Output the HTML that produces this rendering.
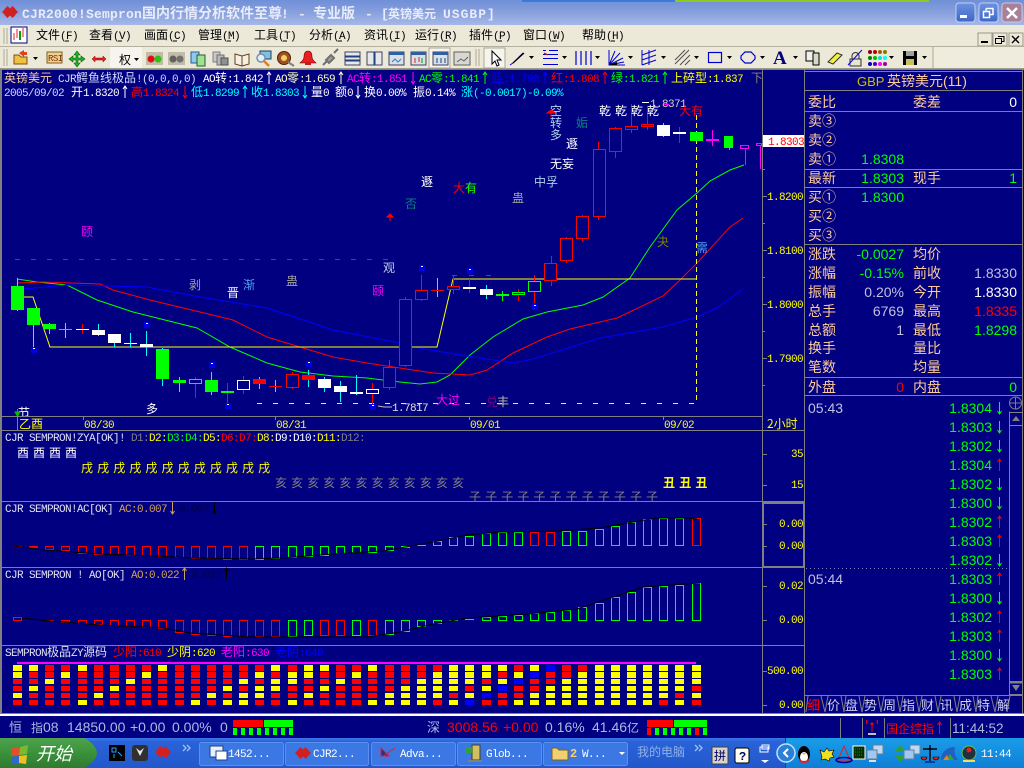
<!DOCTYPE html>
<html><head><meta charset="utf-8"><title>CJR2000</title>
<style>
html,body{margin:0;padding:0;background:#000080;overflow:hidden}
svg{display:block}
text{font-family:"Liberation Mono","WenQuanYi Zen Hei","Noto Sans CJK SC",monospace;font-size:11px;letter-spacing:-.6px;white-space:pre}
.c,tspan.c{font-family:"WenQuanYi Zen Hei","Noto Sans CJK SC",sans-serif;font-size:12px;letter-spacing:0}
.c.o{font-size:14px}
.n{font-family:"Liberation Sans","WenQuanYi Zen Hei",sans-serif;font-size:14px;letter-spacing:0}
.e{text-anchor:end}
.o{fill:#FFCC99}
.y{fill:#FFFF00}
.g{fill:#00FF00}
.l{fill:#C0C0E0}
.w{fill:#fff}
.r{fill:#FF0000}
.k{fill:#000}
.a{fill:none;stroke-width:1}
.t{font-size:13px}
</style></head><body>
<svg xmlns="http://www.w3.org/2000/svg" width="1024" height="768" viewBox="0 0 1024 768">
<defs>
<linearGradient id="tb" x1="0" y1="0" x2="0" y2="1"><stop offset="0" stop-color="#6f8fd8"/><stop offset=".5" stop-color="#88a0dc"/><stop offset="1" stop-color="#a6b8e8"/></linearGradient>
<linearGradient id="tk" x1="0" y1="0" x2="0" y2="1"><stop offset="0" stop-color="#3a78e8"/><stop offset=".12" stop-color="#2a62d8"/><stop offset="1" stop-color="#2258cc"/></linearGradient>
<linearGradient id="st" x1="0" y1="0" x2="0" y2="1"><stop offset="0" stop-color="#4fa24f"/><stop offset=".4" stop-color="#3d963d"/><stop offset="1" stop-color="#2f7a2f"/></linearGradient>
<linearGradient id="tr" x1="0" y1="0" x2="0" y2="1"><stop offset="0" stop-color="#1a9ce8"/><stop offset="1" stop-color="#0f7fd6"/></linearGradient>
<linearGradient id="bb" x1="0" y1="0" x2="0" y2="1"><stop offset="0" stop-color="#6c92e0"/><stop offset="1" stop-color="#3f66c6"/></linearGradient>
<path id="u" d="M0 -6V6M-2 -3L0 -6L2 -3" fill="none"/>
<path id="d" d="M0 -6V6M-2 3L0 6L2 3" fill="none"/>
<path id="row" fill="none" d="M13 0h9M29 0h9M45 0h9M61 0h9M78 0h9M94 0h9M110 0h9M126 0h9M142 0h9M158 0h9M175 0h9M191 0h9M207 0h9M223 0h9M239 0h9M255 0h9M271 0h9M288 0h9M304 0h9M320 0h9M336 0h9M352 0h9M368 0h9M385 0h9M401 0h9M417 0h9M433 0h9M449 0h9M465 0h9M482 0h9M498 0h9M514 0h9M530 0h9M546 0h9M562 0h9M578 0h9M595 0h9M611 0h9M627 0h9M643 0h9M659 0h9M675 0h9M692 0h9"/>
<path id="dd" d="M0 0h5l-2.5 3z" fill="#000"/>
<path id="dm" d="M0 0l3 -3l3 3l-3 3z" fill="#d02020"/>
<clipPath id="cm"><rect x="2" y="70" width="760" height="346"/></clipPath>
<clipPath id="c1"><rect x="2" y="431" width="760" height="70"/></clipPath>
</defs>

<rect width="1024" height="768" fill="#000080"/>
<!-- title -->
<rect width="1024" height="25" fill="url(#tb)"/>
<rect x="522" y="0" width="153" height="2" fill="#3a7ad8"/><rect x="675" y="0" width="254" height="2" fill="#90c820"/>
<g><use href="#dm" x="2" y="12"/><use href="#dm" x="7" y="12"/><use href="#dm" x="12" y="12"/><use href="#dm" x="4.5" y="9"/><use href="#dm" x="9.5" y="9"/><use href="#dm" x="4.5" y="15"/><use href="#dm" x="9.5" y="15"/></g>
<text x="22" y="18" fill="#e8ecfa" style="font-size:13px;letter-spacing:.2px;font-weight:bold">CJR2000!Sempron</text>
<text x="142" y="18" class="c" fill="#e8ecfa" style="font-size:14px;font-weight:bold">国内行情分析软件至尊</text>
<text x="281" y="18" fill="#e8ecfa" style="font-size:13px;letter-spacing:0;font-weight:bold">!</text>
<text x="298" y="18" fill="#e8ecfa" style="font-size:13px;letter-spacing:0;font-weight:bold">-</text>
<text x="313" y="18" class="c" fill="#e8ecfa" style="font-size:14px;font-weight:bold">专业版</text>
<text x="365" y="18" fill="#e8ecfa" style="font-size:13px;letter-spacing:0;font-weight:bold">-</text>
<text x="381" y="18" fill="#e8ecfa" style="font-size:13px;letter-spacing:0;font-weight:bold">[</text>
<text x="388" y="18" class="c" fill="#e8ecfa" style="font-size:12px;font-weight:bold;letter-spacing:0">英镑美元</text>
<text x="443" y="18" fill="#e8ecfa" style="font-size:13px;letter-spacing:1px;font-weight:bold">USGBP]</text>
<rect x="956" y="3" width="19" height="19" rx="3" fill="url(#bb)" stroke="#c0d0f0"/><rect x="960" y="15" width="7" height="3" fill="#fff"/>
<rect x="979" y="3" width="19" height="19" rx="3" fill="url(#bb)" stroke="#c0d0f0"/><path d="M986 8.500h7v6h-3M986 8.500v2M983.500 11.500h6v6h-6z" fill="none" stroke="#fff" stroke-width="1.500"/>
<rect x="1002" y="3" width="20" height="19" rx="3" fill="#a88098" stroke="#d0c8d8"/><path d="M1007 8l10 10M1017 8l-10 10" stroke="#fff" stroke-width="2.500"/>

<!-- menu -->
<rect y="25" width="1024" height="22" fill="#ECE9D8"/>
<rect y="47" width="1024" height="22" fill="#ECE9D8"/>
<path d="M4 28v16M7 28v16" stroke="#c4c0b0" stroke-width="1.500"/>
<rect x="11" y="27" width="16" height="16" fill="#fff" stroke="#000080"/><path d="M14 33v7M17 29v9M20 31v9M23 28v9" stroke="#e02020"/><path d="M20 31v9" stroke="#00a000" stroke-width="2"/>
<g fill="#000">
<text class="c" x="36" y="39">文件</text><text x="60" y="39">(F)</text>
<text class="c" x="89" y="39">查看</text><text x="113" y="39">(V)</text>
<text class="c" x="144" y="39">画面</text><text x="168" y="39">(C)</text>
<text class="c" x="198" y="39">管理</text><text x="222" y="39">(M)</text>
<text class="c" x="254" y="39">工具</text><text x="278" y="39">(T)</text>
<text class="c" x="309" y="39">分析</text><text x="333" y="39">(A)</text>
<text class="c" x="364" y="39">资讯</text><text x="388" y="39">(I)</text>
<text class="c" x="415" y="39">运行</text><text x="439" y="39">(R)</text>
<text class="c" x="469" y="39">插件</text><text x="493" y="39">(P)</text>
<text class="c" x="523" y="39">窗口</text><text x="547" y="39">(W)</text>
<text class="c" x="582" y="39">帮助</text><text x="606" y="39">(H)</text>
</g>
<path d="M65 41h4M118 41h4M173 41h4M227 41h4M283 41h4M338 41h4M393 41h3M444 41h4M498 41h4M552 41h5M611 41h4" stroke="#000"/>
<rect x="978" y="33" width="14" height="13" fill="#ECE9D8" stroke="#9a9888"/><rect x="981" y="41" width="7" height="2" fill="#000"/>
<rect x="993" y="33" width="14" height="13" fill="#ECE9D8" stroke="#9a9888"/><path d="M998 36.500h6v5h-2M995.500 38.500h6v5h-6z" fill="none" stroke="#000"/>
<rect x="1009" y="33" width="14" height="13" fill="#ECE9D8" stroke="#9a9888"/><path d="M1012 36l7 7M1019 36l-7 7" stroke="#000" stroke-width="1.400"/>

<!-- toolbar -->
<path d="M0 46.500h1024" stroke="#b4b0a0"/>
<path d="M4 49v17M7 49v17" stroke="#c4c0b0" stroke-width="1.500"/>
<rect x="933" y="47" width="91" height="21" fill="#EFEBDD"/><path d="M933 47v22" stroke="#aca899"/>
<path d="M14 64V55h5l2 2h6v7z" fill="#f0c040" stroke="#805010"/><path d="M19 53l5-3v2h3v3h-3v2z" fill="#e04020"/>
<use href="#dd" x="33" y="57"/>
<rect x="47" y="52" width="15" height="11" fill="#f0d090" stroke="#806020"/><text x="48" y="61" fill="#803000" style="font-size:9px;letter-spacing:-.5px">RSI</text>
<path d="M77 51l3 4h-2v3h3v-2l4 3-4 3v-2h-3v3h2l-3 4-3-4h2v-3h-3v2l-4-3 4-3v2h3v-3h-2z" fill="#20b020" stroke="#106010" stroke-width=".6"/>
<path d="M92 59l3-3v2h8v-2l3 3-3 3v-2h-8v2z" fill="#f02020" stroke="#800000" stroke-width=".5"/>
<rect x="110" y="47" width="32" height="21" fill="#F6F4EC"/>
<text class="c" x="119" y="64" fill="#000">权</text><use href="#dd" x="134" y="58"/>
<rect x="146" y="52" width="17" height="13" fill="#c0bca8"/><circle cx="151" cy="59" r="3.500" fill="#e01010"/><circle cx="158" cy="59" r="3.500" fill="#30c010"/>
<rect x="168" y="52" width="17" height="13" fill="#c0bca8"/><circle cx="173" cy="59" r="3.500" fill="#606060"/><circle cx="180" cy="59" r="3.500" fill="#707070"/>
<rect x="191" y="52" width="8" height="11" fill="#90c8f0" stroke="#206090"/><rect x="197" y="55" width="8" height="11" fill="#a0e090" stroke="#206030"/>
<rect x="213" y="52" width="7" height="10" fill="#c8c8c8" stroke="#808080"/><rect x="217" y="55" width="7" height="10" fill="#b8b8b8" stroke="#707070"/><rect x="221" y="58" width="7" height="7" fill="#909090" stroke="#505050"/>
<path d="M235 54l7 2 7-2v10l-7 2-7-2zM242 56v10" fill="#f6f0e0" stroke="#604020"/>
<rect x="260" y="51" width="11" height="8" fill="#80c0e0" stroke="#204060"/><circle cx="261" cy="58" r="4" fill="#e0f0ff" stroke="#8090a0" stroke-width="1.500"/><path d="M264 61l5 5" stroke="#e08020" stroke-width="2.500"/>
<circle cx="284" cy="58" r="6.500" fill="#a05020" stroke="#502010"/><circle cx="284" cy="58" r="3" fill="#f0d060"/><path d="M288 62l6 4" stroke="#808080" stroke-width="2"/>
<path d="M308 51c-3 0-4 3-4 6 0 3-3 5-4 6h16c-1-1-4-3-4-6 0-3-1-6-4-6z" fill="#e82020" stroke="#700000" stroke-width=".6"/><rect x="305" y="63" width="6" height="2" fill="#c02020"/>
<path d="M323 65l4-4M334 53l4-4M326 60l5-5 3 3-5 5z" stroke="#707070" stroke-width="2" fill="#a0a0a0"/>
<rect x="345" y="52" width="15" height="13" fill="#e8e8e8" stroke="#404060"/><path d="M345 56.500h15M345 60.500h15" stroke="#204080" stroke-width="2"/>
<rect x="367" y="52" width="15" height="13" fill="#e8e8e8" stroke="#404060"/><path d="M374.500 52v13" stroke="#204080" stroke-width="2"/>
<rect x="389" y="52" width="15" height="13" fill="#d8e0e8" stroke="#404060"/><rect x="389" y="52" width="15" height="3" fill="#3060a0"/><path d="M392 62l3-3 3 3 3-3" stroke="#3080c0" fill="none"/>
<rect x="411" y="52" width="15" height="13" fill="#d8e0e8" stroke="#404060"/><rect x="411" y="52" width="15" height="3" fill="#3060a0"/><path d="M415 58v5M419 57v5" stroke="#e02020"/><path d="M422 58v5" stroke="#00a000"/>
<rect x="429" y="48" width="21" height="20" fill="#F6F4EC" stroke="#aca899"/><rect x="433" y="52" width="15" height="13" fill="#d8e0e8" stroke="#404060"/><rect x="433" y="52" width="15" height="3" fill="#3060a0"/><path d="M437 58v5M441 58v5M445 58v5" stroke="#204080"/>
<rect x="454" y="52" width="16" height="13" fill="#d8d8d0" stroke="#606060"/><path d="M457 62l4-3 3 2 4-4" stroke="#606060" fill="none"/>
<path d="M476 49v17M479 49v17" stroke="#c4c0b0" stroke-width="1.500"/>
<rect x="484" y="48" width="21" height="20" fill="#F6F4EC" stroke="#aca899"/><path d="M492 51v13l3-3 2 5 2-1-2-5h4z" fill="#fff" stroke="#000"/>
<path d="M510 65l3-2M513 63l10-10" stroke="#0000e0"/><path d="M513 63l11-10" stroke="#000" stroke-width="1.200"/><use href="#dd" x="529" y="56"/>
<path d="M543 50.500h3M549 50.500h9M543 54.500h15M543 58.500h15M543 64.500h15" stroke="#0000d0"/><path d="M544 53l4 2" stroke="#d00000"/><use href="#dd" x="562" y="56"/>
<path d="M576 51v14M581 51v14M586 51v14M591 51v14" stroke="#0000d0" stroke-width="1.200"/><use href="#dd" x="595" y="56"/>
<path d="M609 50v15h16M609 65l6-14M609 65l11-12M609 65l14-7M609 65l15-3" stroke="#0000d0" fill="none"/><path d="M609 65l8-3v3z" fill="#000"/><use href="#dd" x="628" y="56"/>
<path d="M642 50v15M642 55l14-5M642 60l14-5M642 65l14-5M649 50v15" stroke="#0000d0" fill="none"/><use href="#dd" x="661" y="56"/>
<path d="M675 60l10-10M675 64l14-14M680 65l10-10M685 65l5-5" stroke="#505050" fill="none"/><use href="#dd" x="694" y="56"/>
<rect x="708.500" y="52.500" width="13" height="10" fill="none" stroke="#0000d0" stroke-width="1.200"/><use href="#dd" x="727" y="56"/>
<path d="M745 52h6l4 4v3l-4 4h-6l-4-4v-3z" fill="none" stroke="#0000d0" stroke-width="1.200"/><use href="#dd" x="760" y="56"/>
<text x="773" y="64" fill="#000080" style="font-family:'Liberation Serif',serif;font-size:19px;font-weight:bold;letter-spacing:0">A</text><use href="#dd" x="793" y="56"/>
<rect x="806" y="51" width="8" height="10" fill="#f0f0e8" stroke="#000"/><path d="M813 53h6v12h-6z" fill="#d8d8c8" stroke="#000"/>
<path d="M828 62l9-9 5 2-9 9z" fill="#f0f040" stroke="#303030"/>
<path d="M850 59h11v7h-11zM852 59v-3a3.500 3.500 0 0 1 7 0v3" fill="#e8e4d0" stroke="#303030"/><path d="M848 65l14-15" stroke="#0000e0"/>
<g><circle cx="870" cy="52" r="2" fill="#900010"/><circle cx="875" cy="52" r="2" fill="#c00000"/><circle cx="880" cy="52" r="2" fill="#a06000"/><circle cx="885" cy="52" r="2" fill="#808000"/><circle cx="870" cy="58" r="2" fill="#008000"/><circle cx="875" cy="58" r="2" fill="#00c000"/><circle cx="880" cy="58" r="2" fill="#00e0e0"/><circle cx="885" cy="58" r="2" fill="#00ffff"/><circle cx="870" cy="64" r="2" fill="#0000d0"/><circle cx="875" cy="64" r="2" fill="#4000c0"/><circle cx="880" cy="64" r="2" fill="#ff00ff"/><circle cx="885" cy="64" r="2" fill="#a000a0"/></g><use href="#dd" x="889" y="56"/>
<path d="M903 51h14v14h-14z" fill="#000"/><rect x="906" y="51" width="8" height="5" fill="#a0a0a0"/><rect x="906" y="59" width="8" height="6" fill="#c8c060"/><use href="#dd" x="922" y="56"/>
<path d="M0 68.500h1024" stroke="#a09c8c"/><path d="M0 69.500h1024" stroke="#808080"/>

<!-- chart frame -->
<g stroke="#808080" fill="none">
<path d="M1 70v644" stroke-width="2"/>
<path d="M762.500 70v644M804.500 70v644M1022.500 70v644"/>
<path d="M2 416.500h760M2 430.500h802M2 501.500h802M2 567.500h802M2 645.500h802"/>
<path d="M804 71.500h219M804 90.500h219M804 111.500h219M804 169.500h219M804 187.500h219M804 244.500h219M804 377.500h219M804 395.500h219M804 695.500h218"/>
<path d="M763 503h41v64h-41z" stroke-width="2"/>
<path d="M17.500 416v14M83.500 416v4M275.500 416v4M469.500 416v4M663.500 416v4"/>
<path d="M762 169.500h3M762 196.500h5M762 223.500h3M762 250.500h5M762 277.500h3M762 304.500h5M762 331.500h3M762 358.500h5M762 385.500h3"/>
<path d="M762 454.500h5M762 485.500h5M762 524.500h5M762 546.500h5M762 586.500h5M762 620.500h5M762 671.500h5M762 705.500h5"/>
</g>
<path d="M0 713.500h1024" stroke="#808080"/><rect y="714" width="1024" height="2" fill="#fff"/>

<!-- header text -->
<text class="c" fill="#FFCC99" x="4" y="82">英镑美元</text>
<text x="58" y="82" fill="#D0D8FF">CJR<tspan class="c">鳄鱼线极品</tspan>!(0,0,0,0)</text>
<text x="203" y="82" fill="#fff">AO<tspan class="c">转</tspan>:1.842</text><use href="#u" x="269" y="78" stroke="#fff"/>
<text x="275" y="82" fill="#FFFFC0">AO<tspan class="c">零</tspan>:1.659</text><use href="#u" x="341" y="78" stroke="#FFFFC0"/>
<text x="347" y="82" fill="#FF00FF">AC<tspan class="c">转</tspan>:1.851</text><use href="#d" x="413" y="78" stroke="#FF00FF"/>
<text x="419" y="82" fill="#00FF00">AC<tspan class="c">零</tspan>:1.841</text><use href="#u" x="485" y="78" stroke="#00FF00"/>
<text x="491" y="82" fill="#0000FF"><tspan class="c">蓝</tspan>:1.798</text><use href="#u" x="545" y="78" stroke="#0000FF"/>
<text x="551" y="82" fill="#FF0000"><tspan class="c">红</tspan>:1.808</text><use href="#u" x="605" y="78" stroke="#FF0000"/>
<text x="611" y="82" fill="#00FF00"><tspan class="c">绿</tspan>:1.821</text><use href="#u" x="665" y="78" stroke="#00FF00"/>
<text x="671" y="82" fill="#FFFF00"><tspan class="c">上碎型</tspan>:1.837</text>
<text class="c" x="751" y="82" fill="#808080">下</text>
<text x="4" y="96" fill="#D0D8FF">2005/09/02</text>
<text x="71" y="96" fill="#fff"><tspan class="c">开</tspan>1.8320</text><use href="#u" x="125" y="92" stroke="#fff"/>
<text x="131" y="96" fill="#FF0000"><tspan class="c">高</tspan>1.8324</text><use href="#d" x="185" y="92" stroke="#FF0000"/>
<text x="191" y="96" fill="#00FFFF"><tspan class="c">低</tspan>1.8299</text><use href="#u" x="245" y="92" stroke="#00FFFF"/>
<text x="251" y="96" fill="#00FFFF"><tspan class="c">收</tspan>1.8303</text><use href="#d" x="305" y="92" stroke="#00FFFF"/>
<text x="311" y="96" fill="#fff"><tspan class="c">量</tspan>0</text>
<text x="335" y="96" fill="#fff"><tspan class="c">额</tspan>0</text><use href="#d" x="358" y="92" stroke="#fff"/>
<text x="364" y="96" fill="#fff"><tspan class="c">换</tspan>0.00%</text>
<text x="413" y="96" fill="#fff"><tspan class="c">振</tspan>0.14%</text>
<text x="461" y="96" fill="#00FFFF"><tspan class="c">涨</tspan>(-0.0017)-0.09%</text>

<!-- main chart -->
<g clip-path="url(#cm)">
<path d="M15 259.500H390" stroke="#C000C0" stroke-dasharray="5 11" fill="none"/>
<path d="M452 275.500H492" stroke="#C000C0" stroke-dasharray="5 12" fill="none"/>
<path d="M257 403.500H697" stroke="#FFFF00" stroke-dasharray="5 11" fill="none"/>
<path d="M17 279L37 282L67 285L97 300L133 312L197 328L230 347L267 363L300 372L333 376L367 378L400 382L420 384L437 382L450 375L470 355L493 337L523 319L547 312L583 305L603 297L630 278L650 247L677 210L697 193L710 181L730 170L744 165" fill="none" stroke="#00FF00"/>
<path d="M17 283L43 282L100 284L113 290L150 300L200 312L233 320L267 337L300 347L333 357L367 363L400 368L433 373L470 375L487 370L513 353L547 337L570 329L617 318L663 296L680 280L697 263L730 227L743 218" fill="none" stroke="#FF0000"/>
<path d="M24 289L67 285L147 287L200 297L267 308L333 330L400 343L413 347L460 355L513 363L533 359L600 338L663 327L697 317L717 308L743 289" fill="none" stroke="#0000FF"/>
<path d="M17 297H33L50 347H437L453 279H697" fill="none" stroke="#FFFF00"/>
<path d="M696.500 115V403" fill="none" stroke="#FFFF00" stroke-dasharray="5 3"/>
<path fill="none" stroke="#00FFFF" d="M17.500 278V311M33.500 310V347M49.500 323V334M65.500 323V338M98.500 324V336M114.500 335V347M130.500 333V347M146.500 331V356M162.500 348V386M179.500 377V392M211.500 372V395M259.500 377V389M275.500 380V392M308.500 370V387M324.500 377V392M340.500 381V402M356.500 375V395M486.500 285V299M437.500 278V297M663.500 123V137"/>
<path fill="none" stroke="#FF0000" d="M82.500 324V334M195.500 377V398M227.500 383V403M243.500 376V394M292.500 372V389M372.500 383V404M389.500 360V390M405.500 297V367M421.500 275V301M453.500 275V294M469.500 279V293M518.500 289V301M534.500 275V303M551.500 256V286M566.500 237V263M582.500 215V241M598.500 142V220M615.500 127V158M631.500 104V133M647.500 107V130M679.500 127V143"/>
<path fill="none" stroke="#00FF00" d="M502.500 291V301M729.500 148V150"/>
<path fill="none" stroke="#FF00FF" d="M712.500 130V146M745.500 148V165M760.500 145V169"/>
<g fill="#00FF00"><rect x="11" y="286" width="13" height="24"/><rect x="27" y="308" width="13" height="17"/><rect x="43" y="324" width="13" height="5"/><rect x="156" y="349" width="13" height="30"/><rect x="173" y="380" width="13" height="3"/><rect x="205" y="380" width="13" height="12"/><rect x="496" y="294" width="13" height="2"/><rect x="690" y="132" width="13" height="9"/><rect x="724" y="136" width="9" height="12"/><rect x="59" y="329" width="13" height="1"/><rect x="221" y="391" width="13" height="2"/></g>
<g fill="#000080" stroke="#00FF00"><rect x="189.500" y="379.500" width="12" height="4"/><rect x="512.500" y="292.500" width="12" height="2"/><rect x="528.500" y="281.500" width="12" height="10"/></g>
<g fill="#fff"><rect x="76" y="329" width="13" height="1"/><rect x="92" y="330" width="13" height="5"/><rect x="108" y="334" width="13" height="9"/><rect x="124" y="343" width="13" height="1"/><rect x="140" y="344" width="13" height="3"/><rect x="318" y="379" width="13" height="9"/><rect x="334" y="386" width="13" height="6"/><rect x="350" y="392" width="13" height="2"/><rect x="463" y="287" width="13" height="2"/><rect x="480" y="289" width="13" height="6"/><rect x="657" y="125" width="13" height="11"/><rect x="673" y="132" width="13" height="2"/></g>
<g fill="#000080" stroke="#fff"><rect x="237.500" y="380.500" width="12" height="9"/><rect x="366.500" y="389.500" width="12" height="4"/></g>
<g fill="#FF0000"><rect x="253" y="379" width="13" height="5"/><rect x="269" y="386" width="13" height="1"/><rect x="302" y="375" width="13" height="5"/><rect x="431" y="290" width="13" height="1"/></g>
<g fill="#000080" stroke="#FF0000"><rect x="286.500" y="374.500" width="12" height="13"/><rect x="383.500" y="367.500" width="12" height="20"/><rect x="399.500" y="299.500" width="12" height="66"/><rect x="415.500" y="290.500" width="12" height="9"/><rect x="447.500" y="286.500" width="12" height="3"/><rect x="544.500" y="263.500" width="12" height="17"/><rect x="560.500" y="238.500" width="12" height="22"/><rect x="576.500" y="216.500" width="12" height="22"/><rect x="593.500" y="149.500" width="12" height="67"/><rect x="609.500" y="128.500" width="12" height="23"/><rect x="625.500" y="126.500" width="12" height="3"/><rect x="641.500" y="124.500" width="12" height="2"/></g>
<rect x="706" y="139" width="13" height="2" fill="#FF00FF"/>
<g fill="#000080" stroke="#FF00FF"><rect x="740.500" y="145.500" width="8" height="3"/><rect x="756.500" y="143.500" width="5" height="2"/></g>
<!-- markers -->
<g fill="#0000E0"><rect x="31" y="347" width="6" height="6"/><rect x="144" y="322" width="6" height="6"/><rect x="209" y="362" width="6" height="6"/><rect x="225" y="403" width="6" height="6"/><rect x="306" y="361" width="6" height="6"/><rect x="370" y="404" width="6" height="6"/><rect x="419" y="265" width="6" height="6"/><rect x="467" y="268" width="6" height="6"/><rect x="532" y="304" width="6" height="6"/></g>
<g fill="#fff"><rect x="33" y="348" width="2" height="1"/><rect x="146" y="323" width="2" height="1"/><rect x="211" y="363" width="2" height="1"/><rect x="227" y="404" width="2" height="1"/><rect x="308" y="362" width="2" height="1"/><rect x="372" y="405" width="2" height="1"/><rect x="421" y="266" width="2" height="1"/><rect x="469" y="269" width="2" height="1"/><rect x="534" y="305" width="2" height="1"/></g>
<!-- labels -->
<text class="c" x="81" y="236" fill="#FF00FF">颐</text>
<text class="c" x="189" y="289" fill="#A0A0A0">剥</text>
<text class="c" x="227" y="297" fill="#fff">晋</text>
<text class="c" x="243" y="289" fill="#50A0F0">渐</text>
<text class="c" x="286" y="285" fill="#A0A0A0">蛊</text>
<text class="c" x="383" y="272" fill="#C0D0E8">观</text>
<text class="c" x="372" y="295" fill="#FF00FF">颐</text>
<text class="c" x="146" y="413" fill="#fff">多</text>
<text class="c" x="18" y="417" fill="#fff">节</text>
<path d="M17.500 409v6M15 412l2.500 4 2.500-4z" fill="#00C000" stroke="#00C000"/>
<text class="c" x="421" y="186" fill="#fff">遯</text>
<text class="c" x="405" y="208" fill="#108080">否</text>
<text class="c" x="453" y="192" fill="#FF0000">大有</text>
<text class="c" x="465" y="192" fill="#00FF00">有</text>
<text class="c" x="512" y="202" fill="#A0A0A0">蛊</text>
<text class="c" x="534" y="186" fill="#B0D0F0">中孚</text>
<text class="c" x="550" y="168" fill="#fff">无妄</text>
<text class="c" x="566" y="148" fill="#fff">遯</text>
<text class="c" x="550" y="115" fill="#B0D0F0">空</text>
<text class="c" x="550" y="127" fill="#B0D0F0">转</text>
<text class="c" x="550" y="139" fill="#B0D0F0">多</text>
<text class="c" x="576" y="127" fill="#108080">姤</text>
<text class="c" x="599" y="115" fill="#fff">乾</text>
<text class="c" x="615" y="115" fill="#fff">乾</text>
<text class="c" x="631" y="115" fill="#fff">乾</text>
<text class="c" x="647" y="115" fill="#fff">乾</text>
<text x="650" y="107" fill="#D0D0D0">1.8371</text>
<path d="M642 102.500h7" stroke="#fff"/><path d="M664 104.500h5" stroke="#FF00FF"/>
<text class="c" x="679" y="115" fill="#FF0000">大有</text>
<path d="M551 111v6M547 113h8l-4-3z" stroke="#FF0000" fill="#FF0000"/>
<path d="M390 215v6M387 217h6l-3-3z" stroke="#FF0000" fill="#FF0000"/>
<text class="c" x="657" y="246" fill="#808000">夬</text>
<text class="c" x="696" y="252" fill="#50A0F0">需</text>
<text class="c" x="436" y="404" fill="#FF00FF">大过</text>
<text class="c" x="486" y="406" fill="#800080">兑</text>
<text class="c" x="497" y="406" fill="#C0C0A0">丰</text>
<path d="M378 406l6 1h8" stroke="#C0C0C0" fill="none"/>
<text x="392" y="411" fill="#E0E0E0">1.7817</text>
</g>

<!-- axis labels -->
<rect x="763" y="135" width="41" height="12" fill="#fff"/><path d="M763 141l4-4v8z" fill="#fff"/>
<text x="768" y="145" fill="#FF0000">1.8303</text>
<g>
<text class="y" x="767" y="200">1.8200</text><text class="y" x="767" y="254">1.8100</text><text class="y" x="767" y="308">1.8000</text><text class="y" x="767" y="362">1.7900</text>
<text class="c y" x="767" y="428">2<tspan>小时</tspan></text>
<text class="y" x="791" y="457">35</text><text class="y" x="791" y="488">15</text>
<text class="y" x="779" y="527">0.00</text><text class="y" x="779" y="549">0.00</text>
<text class="y" x="779" y="589">0.02</text><text class="y" x="779" y="623">0.00</text>
<text class="y" x="767" y="674">500.00</text><text class="y" x="779" y="708">0.00</text>
</g>
<text class="c y" x="19" y="428">乙酉</text>
<text class="y" x="84" y="428">08/30</text><text class="y" x="276" y="428">08/31</text><text class="y" x="470" y="428">09/01</text><text class="y" x="664" y="428">09/02</text>

<!-- ZYA panel -->
<text x="5" y="441" fill="#E0E0F0">CJR SEMPRON!ZYA[OK]!</text>
<text x="131" y="441" fill="#808080">D1:</text><text x="149" y="441" fill="#FFFF00">D2:</text><text x="167" y="441" fill="#00FF00">D3:</text><text x="185" y="441" fill="#00FF00">D4:</text><text x="203" y="441" fill="#FFFF00">D5:</text><text x="221" y="441" fill="#FF0000">D6:</text><text x="239" y="441" fill="#FF0000">D7:</text><text x="257" y="441" fill="#FFFF00">D8:</text><text x="275" y="441" fill="#fff">D9:</text><text x="293" y="441" fill="#fff">D10:</text><text x="317" y="441" fill="#FFFF00">D11:</text><text x="341" y="441" fill="#808080">D12:</text>
<g clip-path="url(#c1)">
<text class="c" x="17" y="457" fill="#fff" style="letter-spacing:4px">酉酉酉酉</text>
<text class="c" x="81" y="472" fill="#FFFF00" style="letter-spacing:4.100px">戌戌戌戌戌戌戌戌戌戌戌戌</text>
<text class="c" x="275" y="487" fill="#808080" style="letter-spacing:4.100px">亥亥亥亥亥亥亥亥亥亥亥亥</text>
<text class="c" x="469" y="501" fill="#808080" style="letter-spacing:4.100px">子子子子子子子子子子子子</text>
<text class="c" x="663" y="487" fill="#FFFF00" style="letter-spacing:4.200px;font-weight:bold">丑丑丑</text>
</g>

<!-- AC panel -->
<text x="5" y="512" fill="#E0E0F0">CJR SEMPRON!AC[OK]</text>
<text x="119" y="512" fill="#D0A060">AC:0.007</text><use href="#d" x="172.500" y="508" stroke="#D0A060"/>
<text x="179" y="512" fill="#000050">0.007</text><use href="#d" x="214.500" y="508" stroke="#000"/>
<path fill="none" stroke="#FF0000" d="M13 546.500h9M29.500 546.500h8V547.500h-8zM45.500 546.500h8V549.500h-8zM61.500 546.500h8V550.500h-8zM78.500 546.500h8V553.500h-8zM94.500 546.500h8V554.500h-8zM110.500 546.500h8V554.500h-8zM126.500 546.500h8V555.500h-8zM142.500 546.500h8V555.500h-8zM158.500 546.500h8V556.500h-8zM175.500 546.500h8V557.500h-8zM191.500 546.500h8V558.500h-8zM207.500 546.500h8V558.500h-8zM223.500 546.500h8V559.500h-8zM239.500 546.500h8V559.500h-8zM530.500 532.500h8V545.500h-8zM546.500 532.500h8V545.500h-8zM692.500 518.500h8V545.500h-8z"/>
<path fill="none" stroke="#00FF00" d="M255.500 546.500h8V559.500h-8zM271.500 546.500h8V558.500h-8zM288.500 546.500h8V557.500h-8zM304.500 546.500h8V556.500h-8zM320.500 546.500h8V555.500h-8zM336.500 546.500h8V553.500h-8zM352.500 546.500h8V552.500h-8zM368.500 546.500h8V552.500h-8zM385.500 546.500h8V550.500h-8zM401.500 546.500h8V547.500h-8zM417 545.500h9M433.500 541.500h8V545.500h-8zM449.500 537.500h8V545.500h-8zM465.500 536.500h8V545.500h-8zM482.500 533.500h8V545.500h-8zM498.500 532.500h8V545.500h-8zM514.500 532.500h8V545.500h-8zM562.500 531.500h8V545.500h-8zM578.500 531.500h8V545.500h-8zM595.500 529.500h8V545.500h-8zM611.500 526.500h8V545.500h-8zM627.500 522.500h8V545.500h-8zM643.500 519.500h8V545.500h-8zM659.500 518.500h8V545.500h-8zM675.500 518.500h8V545.500h-8z"/>
<path fill="none" stroke="#000" d="M13 546L45 550L100 554L157 556L190 558L250 559L283 558L333 554L383 551L400 548L433 542L467 535L500 532L557 531L600 528L633 522L657 518L687 518L697 519"/>

<!-- AO panel -->
<text x="5" y="578" fill="#E0E0F0">CJR SEMPRON ! AO[OK]</text>
<text x="131" y="578" fill="#D0A060">AO:0.022</text><use href="#u" x="184.500" y="574" stroke="#D0A060"/>
<text x="191" y="578" fill="#000050">0.022</text><use href="#u" x="226.500" y="574" stroke="#000"/>
<path fill="none" stroke="#FF0000" d="M13.500 617.500h8V620.500h-8zM45 620.500h9M61.500 620.500h8V622.500h-8zM78.500 620.500h8V623.500h-8zM94.500 620.500h8V624.500h-8zM110.500 620.500h8V625.500h-8zM126.500 620.500h8V626.500h-8zM142.500 620.500h8V627.500h-8zM158.500 620.500h8V628.500h-8zM175.500 620.500h8V632.500h-8zM191.500 620.500h8V634.500h-8zM207.500 620.500h8V635.500h-8zM223.500 620.500h8V636.500h-8zM239.500 620.500h8V636.500h-8zM255.500 620.500h8V636.500h-8zM271.500 620.500h8V636.500h-8zM320.500 620.500h8V635.500h-8zM336.500 620.500h8V635.500h-8zM368.500 620.500h8V635.500h-8z"/>
<path fill="none" stroke="#00FF00" d="M288.500 620.500h8V636.500h-8zM304.500 620.500h8V635.500h-8zM352.500 620.500h8V635.500h-8zM385.500 620.500h8V634.500h-8zM401.500 620.500h8V631.500h-8zM417.500 620.500h8V626.500h-8zM433.500 620.500h8V623.500h-8zM449 620.500h9M465 619.500h9M482.500 617.500h8V620.500h-8zM498.500 616.500h8V620.500h-8zM514.500 615.500h8V620.500h-8zM530.500 613.500h8V620.500h-8zM546.500 612.500h8V620.500h-8zM562.500 610.500h8V620.500h-8zM578.500 607.500h8V620.500h-8zM595.500 603.500h8V620.500h-8zM611.500 597.500h8V620.500h-8zM627.500 592.500h8V620.500h-8zM643.500 587.500h8V620.500h-8zM659.500 586.500h8V620.500h-8zM675.500 585.500h8V620.500h-8zM692.500 583.500h8V620.500h-8z"/>
<path fill="none" stroke="#000" d="M22 618L50 621L100 625L163 628L190 633L250 637L290 637L333 637L367 637L400 632L433 624L467 618L527 614L577 609L610 598L643 587L700 583"/>

<!-- ZY panel -->
<text x="5" y="656" fill="#E0E0F0">SEMPRON<tspan class="c">极品</tspan>ZY<tspan class="c">源码</tspan></text>
<text x="113" y="656" fill="#FF0000"><tspan class="c">少阳</tspan>:610</text>
<text x="167" y="656" fill="#FFFF00"><tspan class="c">少阴</tspan>:620</text>
<text x="221" y="656" fill="#FF00FF"><tspan class="c">老阳</tspan>:630</text>
<text x="275" y="656" fill="#0000FF"><tspan class="c">老阴</tspan>:640</text>
<rect x="17" y="662" width="679" height="2" fill="#FF00FF"/>
<g stroke="#FF0000">
<use href="#row" y="668" stroke-width="6"/><use href="#row" y="675" stroke-width="6"/><use href="#row" y="681.500" stroke-width="5"/><use href="#row" y="688.500" stroke-width="5"/><use href="#row" y="695.500" stroke-width="5"/><use href="#row" y="702.500" stroke-width="5"/>
</g>
<g fill="none" stroke="#FFFF00">
<path stroke-width="6" d="M13 668h9M29 668h9M78 668h9M158 668h9M271 668h9M304 668h9M320 668h9M368 668h9M449 668h9M465 668h9M482 668h9M498 668h9M530 668h9M595 668h9M611 668h9M627 668h9M643 668h9M659 668h9M675 668h9M692 668h9"/>
<path stroke-width="6" d="M13 675h9M61 675h9M142 675h9M255 675h9M288 675h9M304 675h9M352 675h9M433 675h9M449 675h9M465 675h9M482 675h9M514 675h9M578 675h9M595 675h9M611 675h9M627 675h9M643 675h9M659 675h9M675 675h9M692 675h9"/>
<path stroke-width="5" d="M45 681.500h9M126 681.500h9M239 681.500h9M271 681.500h9M288 681.500h9M336 681.500h9M417 681.500h9M433 681.500h9M449 681.500h9M465 681.500h9M498 681.500h9M562 681.500h9M578 681.500h9M595 681.500h9M611 681.500h9M627 681.500h9M643 681.500h9M659 681.500h9M675 681.500h9M692 681.500h9"/>
<path stroke-width="5" d="M29 688.500h9M110 688.500h9M223 688.500h9M255 688.500h9M271 688.500h9M320 688.500h9M401 688.500h9M417 688.500h9M433 688.500h9M449 688.500h9M482 688.500h9M546 688.500h9M562 688.500h9M578 688.500h9M595 688.500h9M611 688.500h9M627 688.500h9M643 688.500h9M659 688.500h9M675 688.500h9"/>
<path stroke-width="5" d="M13 695.500h9M94 695.500h9M207 695.500h9M239 695.500h9M255 695.500h9M304 695.500h9M385 695.500h9M401 695.500h9M417 695.500h9M433 695.500h9M465 695.500h9M530 695.500h9M546 695.500h9M562 695.500h9M578 695.500h9M595 695.500h9M611 695.500h9M627 695.500h9M643 695.500h9M659 695.500h9M692 695.500h9"/>
<path stroke-width="5" d="M78 702.500h9M191 702.500h9M223 702.500h9M239 702.500h9M288 702.500h9M368 702.500h9M385 702.500h9M401 702.500h9M417 702.500h9M449 702.500h9M514 702.500h9M530 702.500h9M546 702.500h9M562 702.500h9M578 702.500h9M595 702.500h9M611 702.500h9M627 702.500h9M643 702.500h9M675 702.500h9"/>
</g>
<g fill="none" stroke="#0000FF"><path stroke-width="6" d="M546 668h9M530 675h9"/><path stroke-width="5" d="M514 681.500h9M498 688.500h9M482 695.500h9M465 702.500h9"/></g>

<!-- right panel -->
<text x="857" y="86" fill="#C8C000" class="n" style="font-size:13px">GBP</text><text class="c o" x="887" y="86">英镑美元</text><text class="n" x="943" y="86" fill="#FFCC99">(11)</text>
<g>
<text class="c o" x="808" y="107">委比</text><text class="c o" x="913" y="107">委差</text>
<text class="c o" x="808" y="126">卖③</text><text class="c o" x="808" y="145">卖②</text><text class="c o" x="808" y="164">卖①</text>
<text class="c o" x="808" y="183">最新</text><text class="c o" x="913" y="183">现手</text>
<text class="c o" x="808" y="202">买①</text><text class="c o" x="808" y="221">买②</text><text class="c o" x="808" y="240">买③</text>
<text class="c o" x="808" y="259">涨跌</text><text class="c o" x="913" y="259">均价</text>
<text class="c o" x="808" y="278">涨幅</text><text class="c o" x="913" y="278">前收</text>
<text class="c o" x="808" y="297">振幅</text><text class="c o" x="913" y="297">今开</text>
<text class="c o" x="808" y="316">总手</text><text class="c o" x="913" y="316">最高</text>
<text class="c o" x="808" y="335">总额</text><text class="c o" x="913" y="335">最低</text>
<text class="c o" x="808" y="353">换手</text><text class="c o" x="913" y="353">量比</text>
<text class="c o" x="808" y="372">笔数</text><text class="c o" x="913" y="372">均量</text>
<text class="c o" x="808" y="392">外盘</text><text class="c o" x="913" y="392">内盘</text>
</g>
<g>
<text class="n e w" x="1017" y="107">0</text>
<text class="n e g" x="904" y="164">1.8308</text>
<text class="n e g" x="904" y="183">1.8303</text><text class="n e g" x="1017" y="183">1</text>
<text class="n e g" x="904" y="202">1.8300</text>
<text class="n e g" x="904" y="259">-0.0027</text>
<text class="n e g" x="904" y="278">-0.15%</text><text class="n e l" x="1017" y="278">1.8330</text>
<text class="n e l" x="904" y="297">0.20%</text><text class="n e w" x="1017" y="297">1.8330</text>
<text class="n e l" x="904" y="316">6769</text><text class="n e r" x="1017" y="316">1.8335</text>
<text class="n e l" x="904" y="335">1</text><text class="n e g" x="1017" y="335">1.8298</text>
<text class="n e r" x="904" y="392">0</text><text class="n e g" x="1017" y="392">0</text>
</g>
<text class="n l" x="808" y="413">05:43</text><text class="n l" x="808" y="584">05:44</text>
<path d="M806 568.500h202" stroke="#8080C0" stroke-dasharray="1 3"/>
<g>
<text class="n e g" x="992" y="413">1.8304</text><text class="n e g" x="992" y="432">1.8303</text><text class="n e g" x="992" y="451">1.8302</text><text class="n e g" x="992" y="470">1.8304</text><text class="n e g" x="992" y="489">1.8302</text><text class="n e g" x="992" y="508">1.8300</text><text class="n e g" x="992" y="527">1.8302</text><text class="n e g" x="992" y="546">1.8303</text><text class="n e g" x="992" y="565">1.8302</text><text class="n e g" x="992" y="584">1.8303</text><text class="n e g" x="992" y="603">1.8300</text><text class="n e g" x="992" y="622">1.8302</text><text class="n e g" x="992" y="641">1.8303</text><text class="n e g" x="992" y="660">1.8300</text><text class="n e g" x="992" y="679">1.8303</text>
</g>
<g stroke="#00FF00"><use href="#d" x="999.500" y="408"/><use href="#d" x="999.500" y="427"/><use href="#d" x="999.500" y="446"/><use href="#d" x="999.500" y="484"/><use href="#d" x="999.500" y="503"/><use href="#d" x="999.500" y="560"/><use href="#d" x="999.500" y="598"/><use href="#d" x="999.500" y="655"/></g>
<g stroke="#FF0000"><use href="#u" x="999.500" y="465"/><use href="#u" x="999.500" y="522"/><use href="#u" x="999.500" y="541"/><use href="#u" x="999.500" y="579"/><use href="#u" x="999.500" y="617"/><use href="#u" x="999.500" y="636"/><use href="#u" x="999.500" y="674"/></g>
<!-- scroll -->
<circle cx="1015.500" cy="403" r="6" fill="none" stroke="#808080"/><path d="M1015.500 397v12M1009.500 403h12" stroke="#808080"/>
<path d="M1009.500 411.500v271M1022.500 411.500v271" stroke="#808080"/>
<rect x="1009.500" y="412.500" width="13" height="13" fill="none" stroke="#808080"/><path d="M1016 416l-4 5h8z" fill="#808080"/>
<rect x="1009.500" y="681.500" width="13" height="13" fill="none" stroke="#808080"/><path d="M1016 691l-4-6h8z" fill="#808080"/>
<path d="M1009 682.500h14" stroke="#808080" stroke-width="2"/>
<!-- tabs -->
<text class="c t" x="807" y="710" fill="#FF0000">细</text>
<g>
<text class="c t" x="827" y="710" fill="#D0D0F0">价</text><text class="c t" x="845" y="710" fill="#D0D0F0">盘</text><text class="c t" x="864" y="710" fill="#D0D0F0">势</text><text class="c t" x="883" y="710" fill="#D0D0F0">周</text><text class="c t" x="902" y="710" fill="#D0D0F0">指</text><text class="c t" x="921" y="710" fill="#D0D0F0">财</text><text class="c t" x="940" y="710" fill="#D0D0F0">讯</text><text class="c t" x="959" y="710" fill="#D0D0F0">成</text><text class="c t" x="977" y="710" fill="#D0D0F0">特</text><text class="c t" x="997" y="710" fill="#D0D0F0">解</text>
</g>
<path fill="none" stroke="#808080" d="M806 712L808 696M821 696L825 712L828 696M841 696L844 712L846 696M859 696L862 712L865 696M878 696L881 712L884 696M897 696L900 712L903 696M916 696L919 712L922 696M935 696L938 712L941 696M954 696L957 712L960 696M973 696L976 712L978 696M991 696L995 712L998 696M1010 696L1007 712"/>

<!-- status bar -->
<rect y="716" width="1024" height="22" fill="#000080"/>
<g>
<text class="c t" x="9" y="732" fill="#B0B8E0">恒</text><text class="n" x="31" y="732" fill="#B0B8E0"><tspan class="c t">指</tspan>08</text>
<text class="n" x="67" y="732" fill="#B0B8E0">14850.00</text><text class="n" x="130" y="732" fill="#B0B8E0">+0.00</text><text class="n" x="172" y="732" fill="#B0B8E0">0.00%</text><text class="n" x="220" y="732" fill="#B0B8E0">0</text>
<text class="c t" x="427" y="732" fill="#B0B8E0">深</text>
<text class="n" x="447" y="732" fill="#FF0000">3008.56</text><text class="n" x="503" y="732" fill="#FF0000">+0.00</text>
<text class="n" x="545" y="732" fill="#B0B8E0">0.16%</text><text class="n" x="592" y="732" fill="#B0B8E0">41.46<tspan class="c t">亿</tspan></text>
</g>
<rect x="233" y="720" width="30" height="7" fill="#FF0000"/><rect x="264" y="720" width="29" height="7" fill="#00FF00"/>
<g fill="#00FF00"><rect x="233" y="728" width="4" height="7"/><rect x="241" y="728" width="4" height="7"/><rect x="249" y="728" width="4" height="7"/><rect x="257" y="728" width="4" height="7"/><rect x="265" y="728" width="4" height="7"/><rect x="273" y="728" width="4" height="7"/><rect x="281" y="728" width="4" height="7"/><rect x="289" y="728" width="4" height="7"/></g>
<rect x="647" y="720" width="26" height="7" fill="#FF0000"/><rect x="674" y="720" width="33" height="7" fill="#00FF00"/>
<g fill="#00FF00"><rect x="655" y="728" width="4" height="7"/><rect x="663" y="728" width="4" height="7"/><rect x="671" y="728" width="4" height="7"/><rect x="679" y="728" width="4" height="7"/><rect x="687" y="728" width="4" height="7"/><rect x="703" y="728" width="4" height="7"/></g>
<rect x="647" y="728" width="4" height="7" fill="#FF0000"/><rect x="695" y="728" width="4" height="7" fill="#FF0000"/>
<path d="M840.500 718v20M862.500 718v20M884.500 718v20M950.500 718v20" stroke="#808080"/>
<circle cx="872" cy="724" r="1.500" fill="#FF0000"/><path d="M867 724a5 5 0 0 1 0-4M877 724a5 5 0 0 0 0-4M872 726v6" stroke="#FF0000" fill="none"/><path d="M868 734h8" stroke="#C0C0C0" stroke-width="2"/>
<text class="c r" x="886" y="733">国企综指</text><use href="#u" x="939.500" y="728" stroke="#FF0000"/>
<text class="n" x="952" y="733" fill="#B0B8E0" style="font-size:13.500px">11:44:52</text>

<!-- taskbar -->
<rect y="738" width="1024" height="30" fill="url(#tk)"/>
<path d="M0 738H84Q96 744 97 753Q96 762 84 768H0z" fill="url(#st)"/>
<g><path d="M12 748l7-1v8l-8 1z" fill="#e0502c"/><path d="M20 747l8-2-1 9-8 1z" fill="#7cb830"/><path d="M11 757l8-1v8l-8-1z" fill="#3068d0"/><path d="M19 756l8-1-1 9-7-1z" fill="#f0c020"/></g>
<text class="c" x="36" y="760" fill="#fff" style="font-size:18px;font-style:italic">开始</text>
<rect x="109" y="745" width="16" height="16" fill="#000"/><path d="M112 748h4v4h-4zM118 752l4 4M114 754v4" stroke="#30a0ff" fill="none"/>
<rect x="132" y="745" width="16" height="16" rx="3" fill="#303030"/><path d="M136 748l4 8 4-8-4 3z" fill="#e8e8e8"/>
<g><use href="#dm" x="155" y="752"/><use href="#dm" x="160" y="752"/><use href="#dm" x="165" y="752"/><use href="#dm" x="157.500" y="749"/><use href="#dm" x="162.500" y="749"/><use href="#dm" x="157.500" y="755"/><use href="#dm" x="162.500" y="755"/></g>
<path d="M183 745l3 3-3 3M187 745l3 3-3 3" stroke="#a0c0f0" fill="none" stroke-width="1.300"/>
<g fill="#3c78e4" stroke="#5a90f0">
<rect x="199.500" y="742.500" width="84" height="23" rx="2"/><rect x="285.500" y="742.500" width="83" height="23" rx="2"/><rect x="371.500" y="742.500" width="84" height="23" rx="2"/><rect x="457.500" y="742.500" width="84" height="23" rx="2"/><rect x="543.500" y="742.500" width="84" height="23" rx="2"/>
</g>
<rect x="210" y="746" width="13" height="11" fill="#e8f0ff" stroke="#204080"/><rect x="216" y="751" width="11" height="9" fill="#fff" stroke="#204080"/>
<g><use href="#dm" x="295" y="753"/><use href="#dm" x="300" y="753"/><use href="#dm" x="305" y="753"/><use href="#dm" x="297.500" y="750"/><use href="#dm" x="302.500" y="750"/><use href="#dm" x="297.500" y="756"/><use href="#dm" x="302.500" y="756"/></g>
<path d="M381 748l8 8h-8zM383 756l12-8" fill="#203090" stroke="#e02020"/>
<rect x="472" y="745" width="8" height="15" fill="#d0c060" stroke="#404020"/><rect x="466" y="747" width="6" height="6" fill="#30a040"/><rect x="468" y="760" width="14" height="2" fill="#808080"/>
<path d="M552 760v-12h5l2 2h9v10z" fill="#f0d070" stroke="#806020"/>
<g>
<text x="228" y="757" fill="#fff">1452...</text><text x="313" y="757" fill="#fff">CJR2...</text><text x="400" y="757" fill="#fff">Adva...</text><text x="486" y="757" fill="#fff">Glob...</text><text x="582" y="757" fill="#fff">W...</text>
</g>
<text x="570" y="757" fill="#FFD060" style="font-weight:bold;font-size:12px">2</text>
<path d="M619 752h6l-3 3z" fill="#fff"/>
<text class="c" x="637" y="756" fill="#8FB0E8">我的电脑</text>
<path d="M695 745l3 3-3 3M699 745l3 3-3 3" stroke="#a0c0f0" fill="none" stroke-width="1.300"/>
<rect x="712" y="747" width="16" height="17" fill="#D8D4C8" stroke="#404040"/><text class="c" x="714" y="760" fill="#000060">拼</text>
<rect x="735" y="748" width="14" height="15" rx="2" fill="#fffff0" stroke="#000"/><text x="739" y="760" fill="#000060" style="font-weight:bold;font-size:12px">?</text>
<rect x="760" y="747" width="8" height="5" fill="none" stroke="#fff"/><path d="M761 760h8l-4 3z" fill="#fff"/><rect x="762" y="745" width="7" height="4" fill="none" stroke="#fff"/>
<rect x="786" y="738" width="238" height="30" fill="url(#tr)"/>
<path d="M785.500 738v30" stroke="#0a4a90"/>
<circle cx="786" cy="753" r="9" fill="#2a80d8" stroke="#c0e0ff" stroke-width="1.500"/><path d="M788 749l-4 4 4 4" stroke="#fff" stroke-width="2" fill="none"/>
<ellipse cx="804" cy="754" rx="6" ry="8" fill="#000"/><ellipse cx="804" cy="757" rx="4" ry="5" fill="#fff"/><path d="M799 761l5 1 5-1" stroke="#e02020" stroke-width="2" fill="none"/><path d="M802 753h4l-2 2z" fill="#f0b000"/>
<path d="M820 750l4 2 3-4 2 3 5-1-2 4 2 3-4 1-1 3-4-2-4 1 1-3z" fill="#f0e020" stroke="#000" stroke-width=".6"/>
<path d="M838 760l6-14 6 14z" fill="none" stroke="#e02020"/><ellipse cx="844" cy="760" rx="8" ry="2.500" fill="none" stroke="#0000a0" stroke-width="1.500"/>
<rect x="853" y="746" width="12" height="13" fill="#003000" stroke="#fff"/><path d="M855 749h8M855 752h8M855 755h8" stroke="#00a000" stroke-dasharray="1 1"/>
<rect x="873" y="745" width="10" height="9" fill="#c0d8f0" stroke="#6080a0"/><rect x="867" y="750" width="10" height="9" fill="#a0c8f0" stroke="#6080a0"/><rect x="869" y="760" width="7" height="2" fill="#e0e0e0"/>
<path d="M894 752l6-7 6 7zM894 755h12l-6 7z" fill="#30a030"/>
<rect x="910" y="745" width="10" height="9" fill="#c0d8f0" stroke="#6080a0"/><rect x="904" y="750" width="10" height="9" fill="#a0c8f0" stroke="#6080a0"/>
<path d="M930 745v16M923 749h14" stroke="#000" stroke-width="1.400"/><path d="M921 757a3 3 0 0 0 6 0zM933 757a3 3 0 0 0 6 0z" fill="#e02020" stroke="#000" stroke-width=".6"/><rect x="925" y="761" width="10" height="2" fill="#0040a0"/>
<path d="M941 760c0-8 6-13 14-13-1 5 0 10 3 13z" fill="#2060c0"/><path d="M946 760l4-6 4 6z" fill="#30a040"/><path d="M943 760l4-5 2 5z" fill="#f08020"/>
<circle cx="969" cy="753" r="7" fill="#203040" stroke="#60c060"/><circle cx="969" cy="750" r="2.500" fill="#e02020"/><path d="M963 760h12v2h-12z" fill="#f0e060"/>
<text x="981" y="757" fill="#fff">11:44</text>
</svg>
</body></html>
